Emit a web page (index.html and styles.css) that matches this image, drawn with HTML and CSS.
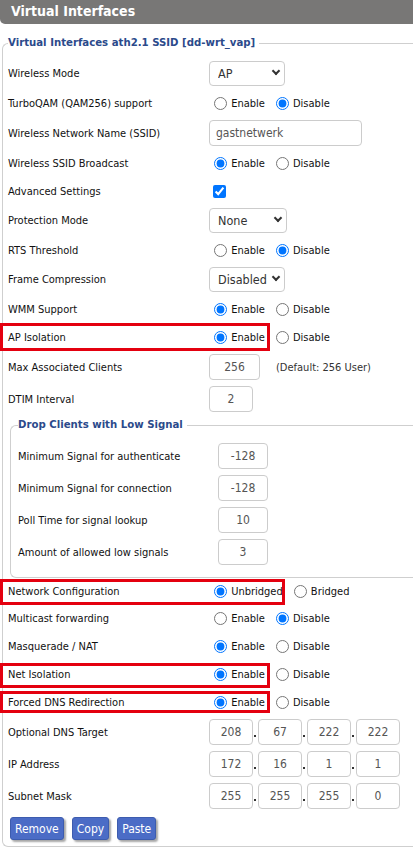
FILE: index.html
```html
<!DOCTYPE html>
<html>
<head>
<meta charset="utf-8">
<title>Virtual Interfaces</title>
<link rel="stylesheet" href="styles.css">
</head>
<body>
<div class="page">
  <div class="header">Virtual Interfaces</div>
  <fieldset class="fs outer">
    <legend>Virtual Interfaces ath2.1 SSID [dd-wrt_vap]</legend>

    <div class="row h31"><span class="lbl">Wireless Mode</span>
      <div class="val"><span class="sel"><select class="w76"><option>AP</option></select></span></div></div>

    <div class="row"><span class="lbl">TurboQAM (QAM256) support</span>
      <div class="val radios"><label><input type="radio" name="tq"> Enable</label><label><input type="radio" name="tq" checked> Disable</label></div></div>

    <div class="row h32"><span class="lbl">Wireless Network Name (SSID)</span>
      <div class="val"><input class="txt w153" type="text" value="gastnetwerk"></div></div>

    <div class="row"><span class="lbl">Wireless SSID Broadcast</span>
      <div class="val radios"><label><input type="radio" name="sb" checked> Enable</label><label><input type="radio" name="sb"> Disable</label></div></div>

    <div class="row"><span class="lbl">Advanced Settings</span>
      <div class="val"><input class="chk" type="checkbox" checked></div></div>

    <div class="row h31"><span class="lbl">Protection Mode</span>
      <div class="val"><span class="sel"><select class="w78"><option>None</option></select></span></div></div>

    <div class="row"><span class="lbl">RTS Threshold</span>
      <div class="val radios"><label><input type="radio" name="rts"> Enable</label><label><input type="radio" name="rts" checked> Disable</label></div></div>

    <div class="row h31"><span class="lbl">Frame Compression</span>
      <div class="val"><span class="sel"><select class="w76"><option>Disabled</option></select></span></div></div>

    <div class="row"><span class="lbl">WMM Support</span>
      <div class="val radios"><label><input type="radio" name="wmm" checked> Enable</label><label><input type="radio" name="wmm"> Disable</label></div></div>

    <div class="row"><span class="lbl">AP Isolation</span>
      <div class="val radios"><label><input type="radio" name="api" checked> Enable</label><label><input type="radio" name="api"> Disable</label></div></div>

    <div class="row h32"><span class="lbl">Max Associated Clients</span>
      <div class="val inl"><input class="txt num w51" type="text" value="256"><span class="def">(Default: 256 User)</span></div></div>

    <div class="row h32"><span class="lbl">DTIM Interval</span>
      <div class="val"><input class="txt num w44" type="text" value="2"></div></div>

    <fieldset class="fs inner">
      <legend>Drop Clients with Low Signal</legend>
      <div class="row h32"><span class="lbl">Minimum Signal for authenticate</span>
        <div class="val"><input class="txt num w50" type="text" value="-128"></div></div>
      <div class="row h32"><span class="lbl">Minimum Signal for connection</span>
        <div class="val"><input class="txt num w50" type="text" value="-128"></div></div>
      <div class="row h32"><span class="lbl">Poll Time for signal lookup</span>
        <div class="val"><input class="txt num w50" type="text" value="10"></div></div>
      <div class="row h32"><span class="lbl">Amount of allowed low signals</span>
        <div class="val"><input class="txt num w50" type="text" value="3"></div></div>
    </fieldset>

    <div class="row h26"><span class="lbl">Network Configuration</span>
      <div class="val radios"><label><input type="radio" name="nc" checked> Unbridged</label><label><input type="radio" name="nc"> Bridged</label></div></div>

    <div class="row"><span class="lbl">Multicast forwarding</span>
      <div class="val radios"><label><input type="radio" name="mf"> Enable</label><label><input type="radio" name="mf" checked> Disable</label></div></div>

    <div class="row"><span class="lbl">Masquerade / NAT</span>
      <div class="val radios"><label><input type="radio" name="mq" checked> Enable</label><label><input type="radio" name="mq"> Disable</label></div></div>

    <div class="row"><span class="lbl">Net Isolation</span>
      <div class="val radios"><label><input type="radio" name="ni" checked> Enable</label><label><input type="radio" name="ni"> Disable</label></div></div>

    <div class="row"><span class="lbl">Forced DNS Redirection</span>
      <div class="val radios"><label><input type="radio" name="fd" checked> Enable</label><label><input type="radio" name="fd"> Disable</label></div></div>

    <div class="row h32"><span class="lbl">Optional DNS Target</span>
      <div class="val ip"><input class="txt num w44" type="text" value="208"><span class="dot"></span><input class="txt num w44" type="text" value="67"><span class="dot"></span><input class="txt num w44" type="text" value="222"><span class="dot"></span><input class="txt num w44" type="text" value="222"></div></div>

    <div class="row h32"><span class="lbl">IP Address</span>
      <div class="val ip"><input class="txt num w44" type="text" value="172"><span class="dot"></span><input class="txt num w44" type="text" value="16"><span class="dot"></span><input class="txt num w44" type="text" value="1"><span class="dot"></span><input class="txt num w44" type="text" value="1"></div></div>

    <div class="row h32"><span class="lbl">Subnet Mask</span>
      <div class="val ip"><input class="txt num w44" type="text" value="255"><span class="dot"></span><input class="txt num w44" type="text" value="255"><span class="dot"></span><input class="txt num w44" type="text" value="255"><span class="dot"></span><input class="txt num w44" type="text" value="0"></div></div>

    <div class="btns">
      <button class="btn" type="button">Remove</button>
      <button class="btn" type="button">Copy</button>
      <button class="btn" type="button">Paste</button>
    </div>
  </fieldset>

  <div class="mark m-ap"></div>
  <div class="mark m-nc"></div>
  <div class="mark m-ni"></div>
  <div class="mark m-fd"></div>
</div>
</body>
</html>
```

FILE: styles.css
```css
html, body {
  margin: 0;
  padding: 0;
  background: #fff;
  overflow: hidden;
}
body {
  font-family: "DejaVu Sans Condensed", "DejaVu Sans", sans-serif;
  font-stretch: condensed;
  font-size: 11px;
  color: #111;
}
.page {
  position: relative;
  width: 413px;
}
.header {
  height: 24px;
  background: #787776;
  color: #fff;
  font-weight: bold;
  font-size: 14px;
  line-height: 23px;
  padding-left: 11px;
  border-radius: 0 0 0 5px;
}
.fs {
  border: 1px solid #cfcfcf;
  border-right: none;
  border-radius: 6px 0 0 6px;
  min-width: 0;
  margin-right: 0;
}
.fs legend {
  padding: 0 4px 0 0;
  font-weight: bold;
  font-size: 11.3px;
  line-height: 16px;
  color: #2b4a8b;
}
.outer {
  margin: 11px 0 0 2px;
  padding: 7px 0 6px 5px;
}
.inner {
  margin: 2px 0 0 2px;
  padding: 7px 0 9px 7px;
}
.row {
  display: grid;
  grid-template-columns: 201px 1fr;
  align-items: center;
  height: 28px;
}
.inner .row {
  grid-template-columns: 200px 1fr;
}
.h26 { height: 26px; }
.h31 { height: 31px; }
.h32 { height: 32px; }
.val {
  display: flex;
  align-items: center;
}
.radios label {
  display: flex;
  align-items: center;
  margin-right: 6px;
  white-space: pre;
}
.radios input {
  width: 13px;
  height: 13px;
  margin: 0 1px 0 5px;
}
.chk {
  width: 13px;
  height: 13px;
  margin: 0 0 0 4px;
}
.txt {
  box-sizing: border-box;
  height: 26px;
  border: 1px solid #cccccc;
  border-radius: 4px;
  font-family: inherit;
  font-stretch: condensed;
  font-size: 12px;
  color: #555;
  padding: 0 6px;
  background: #fff;
}
.num {
  text-align: center;
  padding: 0;
}
.w153 { width: 153px; }
.w51 { width: 51px; }
.w50 { width: 50px; }
.w44 { width: 44px; }
.def {
  margin-left: 16px;
  color: #333;
}
.ip {
  align-items: stretch;
}
.dot {
  position: relative;
  width: 5px;
}
.dot::after {
  content: "";
  position: absolute;
  left: 1px;
  bottom: 8px;
  width: 2px;
  height: 2px;
  background: #333;
}
.sel {
  position: relative;
  display: flex;
}
.sel select {
  appearance: none;
  -webkit-appearance: none;
  box-sizing: border-box;
  height: 25px;
  border: 1px solid #cccccc;
  border-radius: 4px;
  background: #fff;
  font-family: inherit;
  font-stretch: condensed;
  font-size: 12.5px;
  color: #333;
  padding: 0 0 0 8px;
  margin: 0;
}
.sel .w76 { width: 76px; }
.sel .w78 { width: 78px; }
.sel::after {
  content: "";
  position: absolute;
  right: 6px;
  top: 7px;
  width: 4px;
  height: 4px;
  border-right: 2px solid #333;
  border-bottom: 2px solid #333;
  transform: rotate(45deg);
  pointer-events: none;
}
.btns {
  display: flex;
  gap: 8px;
  margin: 5px 0 0 2px;
}
.btn {
  height: 23px;
  box-sizing: border-box;
  background: #4b6cc6;
  color: #fff;
  border: 1px solid #3d5cae;
  border-radius: 3px;
  font-family: inherit;
  font-stretch: condensed;
  font-size: 12px;
  padding: 0 4px;
  box-shadow: 2px 2px 2px rgba(0, 0, 0, 0.35);
}
.mark {
  position: absolute;
  box-sizing: border-box;
  border: 3px solid #e4000f;
}
.m-ap { left: 0; top: 323px; width: 270px; height: 28px; }
.m-nc { left: 0; top: 579px; width: 285px; height: 26px; }
.m-ni { left: 0; top: 663px; width: 270px; height: 25px; }
.m-fd { left: 0; top: 691px; width: 270px; height: 22px; }
```
